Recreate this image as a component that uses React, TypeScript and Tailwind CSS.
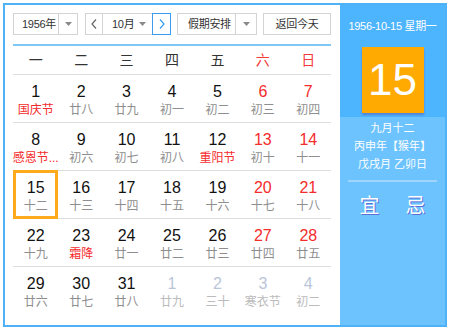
import React from "react";

type Day = { n: number; l: string; red?: boolean; hol?: boolean; dim?: boolean; sel?: boolean };

const rows: Day[][] = [
  [
    { n: 1, l: "国庆节", hol: true },
    { n: 2, l: "廿八" },
    { n: 3, l: "廿九" },
    { n: 4, l: "初一" },
    { n: 5, l: "初二" },
    { n: 6, l: "初三", red: true },
    { n: 7, l: "初四", red: true },
  ],
  [
    { n: 8, l: "感恩节...", hol: true },
    { n: 9, l: "初六" },
    { n: 10, l: "初七" },
    { n: 11, l: "初八" },
    { n: 12, l: "重阳节", hol: true },
    { n: 13, l: "初十", red: true },
    { n: 14, l: "十一", red: true },
  ],
  [
    { n: 15, l: "十二", sel: true },
    { n: 16, l: "十三" },
    { n: 17, l: "十四" },
    { n: 18, l: "十五" },
    { n: 19, l: "十六" },
    { n: 20, l: "十七", red: true },
    { n: 21, l: "十八", red: true },
  ],
  [
    { n: 22, l: "十九" },
    { n: 23, l: "霜降", hol: true },
    { n: 24, l: "廿一" },
    { n: 25, l: "廿二" },
    { n: 26, l: "廿三" },
    { n: 27, l: "廿四", red: true },
    { n: 28, l: "廿五", red: true },
  ],
  [
    { n: 29, l: "廿六" },
    { n: 30, l: "廿七" },
    { n: 31, l: "廿八" },
    { n: 1, l: "廿九", dim: true },
    { n: 2, l: "三十", dim: true },
    { n: 3, l: "寒衣节", dim: true },
    { n: 4, l: "初二", dim: true },
  ],
];

const weekdays = ["一", "二", "三", "四", "五", "六", "日"];

function Caret() {
  return (
    <svg width="7" height="4" viewBox="0 0 7 4">
      <path d="M0 0 L7 0 L3.5 4 Z" fill="#8a8a8a" />
    </svg>
  );
}

export default function App() {
  return (
    <div
      className="w-[450px] h-[330px] bg-white p-[3px]"
      style={{ fontFamily: '"Liberation Sans", Arial, "Noto Sans CJK SC", sans-serif' }}
    >
      <div className="flex h-[324px] w-[444px] border-2 border-[#4fb2f6]">
        {/* left */}
        <div className="w-[335px] pl-[8px] pr-[9px] pt-[8px]">
          <div className="flex h-[22px] items-stretch whitespace-nowrap text-[11px] tracking-[-0.3px] text-[#333]">
            <div className="flex w-[65px] border border-[#d4d4d4]">
              <div className="flex flex-1 items-center pl-[8px]">1956年</div>
              <div className="flex w-[19px] items-center justify-center border-l border-[#d4d4d4]">
                <Caret />
              </div>
            </div>
            <div className="ml-[7px] flex">
              <div className="flex w-[18px] items-center justify-center border border-[#d4d4d4]">
                <svg width="6" height="10" viewBox="0 0 6 10">
                  <path d="M5 0.5 L1 5 L5 9.5" fill="none" stroke="#666" strokeWidth="1.2" />
                </svg>
              </div>
              <div className="flex w-[49px] items-center border-y border-[#d4d4d4] pl-[9px]">
                <span className="flex-1">10月</span>
                <span className="mr-[6px] flex items-center">
                  <Caret />
                </span>
              </div>
              <div className="flex w-[19px] items-center justify-center border border-[#3b9cf0]">
                <svg width="6" height="10" viewBox="0 0 6 10">
                  <path d="M1 0.5 L5 5 L1 9.5" fill="none" stroke="#3b9cf0" strokeWidth="1.2" />
                </svg>
              </div>
            </div>
            <div className="ml-[6px] flex w-[80px] border border-[#d4d4d4]">
              <div className="flex flex-1 items-center pl-[10px]">假期安排</div>
              <div className="flex w-[21px] items-center justify-center border-l border-[#d4d4d4]">
                <Caret />
              </div>
            </div>
            <div className="ml-[6px] flex w-[68px] items-center justify-center border border-[#d4d4d4]">
              返回今天
            </div>
          </div>
          <div className="mt-[9px] h-[2px] bg-[#7fc8f6]" />
          <div className="grid h-[28px] grid-cols-7 items-center text-[14px] text-[#333]">
            {weekdays.map((w, i) => (
              <div key={w} className={`text-center ${i >= 5 ? "text-[#f43b3b]" : ""}`}>
                {w}
              </div>
            ))}
          </div>
          <div className="h-px bg-[#dedede]" />
          {rows.map((r, ri) => (
            <div key={ri}>
              <div className="grid h-[47px] grid-cols-7">
                {r.map((d, di) => (
                  <div key={di} className="relative flex flex-col items-center pt-[9px]">
                    {d.sel && (
                      <span className="absolute inset-x-0 -top-px -bottom-px border-[3px] border-[#ffa91c]" />
                    )}
                    <div
                      className={`h-[16px] text-[16px] leading-[16px] ${
                        d.dim ? "text-[#b9c6d8]" : d.red ? "text-[#f42c2c]" : "text-[#111]"
                      }`}
                    >
                      {d.n}
                    </div>
                    <div
                      className={`mt-[2px] h-[16px] whitespace-nowrap text-[12px] leading-[16px] ${
                        d.hol ? "text-[#f42c2c]" : d.dim ? "text-[#bbbbbb]" : "text-[#8e8e8e]"
                      }`}
                    >
                      {d.l}
                    </div>
                  </div>
                ))}
              </div>
              {ri < 4 && <div className="h-px bg-[#dedede]" />}
            </div>
          ))}
        </div>
        {/* right */}
        <div className="flex w-[105px] flex-col bg-[#6dc3fe] text-white">
          <div className="flex h-[112px] flex-col items-center bg-[#4db4fe]">
            <div className="mt-[14px] whitespace-nowrap text-[11px] leading-[14px] tracking-[-0.3px]">1956-10-15 星期一</div>
            <div className="mt-[14px] flex h-[66px] w-[62px] items-center justify-center bg-[#ffaa00] text-[44px] leading-none shadow-[0_2px_2px_rgba(90,70,170,0.45)]">
              15
            </div>
          </div>
          <div className="mt-[2px] flex flex-col items-center whitespace-nowrap text-[11px] leading-[18px]">
            <div>九月十二</div>
            <div>丙申年【猴年】</div>
            <div>戊戌月 乙卯日</div>
          </div>
          <div className="mx-[8px] mt-[7px] h-[2px] bg-[#9fd5fb]" />
          <div className="mt-[12px] flex justify-center gap-[26px] text-[20px] leading-[24px] [text-shadow:1px_1px_0_#5a6fd8]">
            <span>宜</span>
            <span>忌</span>
          </div>
        </div>
      </div>
    </div>
  );
}
